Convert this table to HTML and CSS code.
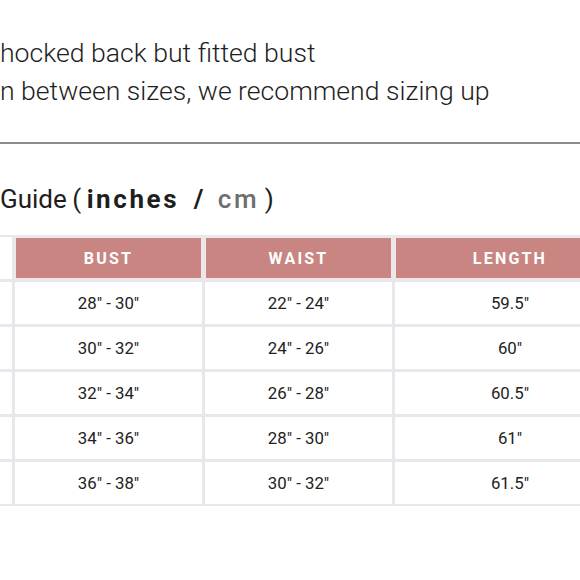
FILE: index.html
```html
<!DOCTYPE html>
<html>
<head>
<meta charset="utf-8">
<link rel="stylesheet" href="styles.css">
</head>
<body>
<div class="page">
  <div class="notes">
    <p class="note">hocked back but fitted bust</p>
    <p class="note">n between sizes, we recommend sizing up</p>
  </div>
  <hr class="rule">
  <h2 class="guide">Guide <span class="paren">(</span> <span class="unit active">inches</span> <span class="slash">/</span> <span class="unit">cm</span> <span class="paren">)</span></h2>
  <div class="table">
    <div class="cell side"></div><div class="cell head">BUST</div><div class="cell head">WAIST</div><div class="cell head">LENGTH</div>
    <div class="cell side"></div><div class="cell">28" - 30"</div><div class="cell">22" - 24"</div><div class="cell">59.5"</div>
    <div class="cell side"></div><div class="cell">30" - 32"</div><div class="cell">24" - 26"</div><div class="cell">60"</div>
    <div class="cell side"></div><div class="cell">32" - 34"</div><div class="cell">26" - 28"</div><div class="cell">60.5"</div>
    <div class="cell side"></div><div class="cell">34" - 36"</div><div class="cell">28" - 30"</div><div class="cell">61"</div>
    <div class="cell side"></div><div class="cell">36" - 38"</div><div class="cell">30" - 32"</div><div class="cell">61.5"</div>
  </div>
</div>
</body>
</html>
```
FILE: styles.css
```css
html, body {
  margin: 0;
  padding: 0;
  background: #fff;
  overflow: hidden;
}
.page {
  width: 580px;
  height: 580px;
  overflow: hidden;
  font-family: Roboto, "Liberation Sans", sans-serif;
  color: #222;
}
.notes {
  padding-top: 34px;
}
.note {
  margin: 0;
  font-size: 26.6px;
  font-weight: 300;
  line-height: 38px;
  color: #1e1e1e;
  white-space: nowrap;
}
.rule {
  margin: 32px 0 0 0;
  border: 0;
  height: 2px;
  background: #8c8c8c;
}
.guide {
  margin: 37px 0 0 0;
  font-size: 26px;
  font-weight: 400;
  line-height: 36px;
  color: #1e1e1e;
  white-space: nowrap;
  word-spacing: -1px;
}
.unit {
  letter-spacing: 2.6px;
  font-weight: 500;
  color: #6e6e6e;
}
.unit.active {
  font-weight: 700;
  color: #1e1e1e;
}
.slash {
  font-weight: 700;
  margin: 0 9px;
}
.table {
  margin-top: 18px;
  display: grid;
  grid-template-columns: 12px 187px 187px 230px;
  grid-auto-rows: 42px;
  gap: 3px;
  background: #e8e8ec;
  padding: 2px 0 2px 0;
  width: 630px;
}
.cell {
  background: #fff;
  display: flex;
  align-items: center;
  justify-content: center;
  font-size: 16.8px;
  color: #222;
}
.cell.head {
  background: #c98582;
  color: #fff;
  font-weight: 700;
  font-size: 16px;
  letter-spacing: 2.2px;
  box-shadow: inset 0 0 0 1px #f4e6e6;
}
```
